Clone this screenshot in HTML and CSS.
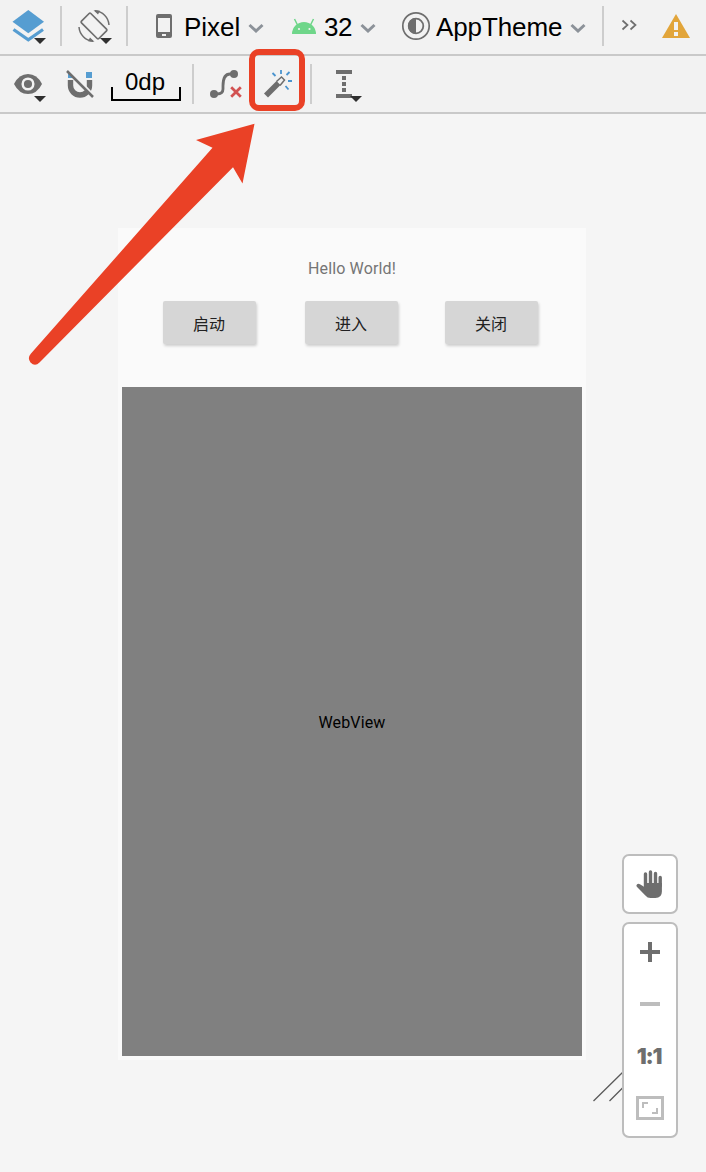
FILE: index.html
```
<!DOCTYPE html>
<html lang="zh">
<head>
<meta charset="utf-8">
<title>Layout Editor</title>
<link rel="stylesheet" href="styles.css">
</head>
<body>
<div class="editor">
  <header class="toolbar toolbar-main">
    <svg class="ic-layers" width="38" height="54" viewBox="10 0 38 54">
      <path d="M28.3 10L44 21.7 28.3 33.3 12.5 21.7z" fill="#569dd1"/>
      <path d="M13.5 29.5L28.3 39.8 43 29.5" fill="none" stroke="#569dd1" stroke-width="3.2"/>
      <path d="M34 38h12l-6 6z" fill="#2f2f2f"/>
    </svg>
    <span class="sep sep-a"></span>
    <svg class="ic-rotate" width="38" height="54" viewBox="76 0 38 54">
      <g fill="none" stroke="#6e6e6e">
        <rect x="-6.6" y="-12.3" width="13.2" height="24.6" rx="1.2" transform="translate(94 26) rotate(-45)" stroke-width="1.7"/>
        <path d="M95 10.800A15.300 15.300 0 0 1 109 25M93 41.200A15.300 15.300 0 0 1 79 27" stroke-width="1.500"/>
      </g>
      <path d="M93.500 10.200l6.500.6-2 3.700zM94.500 41.800l-6.500-.6 2-3.700z" fill="#6e6e6e"/>
      <path d="M100 38h12l-6 6z" fill="#2f2f2f"/>
    </svg>
    <span class="sep sep-b"></span>
    <svg class="ic-phone" width="18" height="54" viewBox="155 0 18 54">
      <path fill-rule="evenodd" d="M158 14h12q2 0 2 2v20q0 2-2 2h-12q-2 0-2-2V16q0-2 2-2zM158 18v14h12V18zM162 34v2h4v-2z" fill="#6e6e6e"/>
    </svg>
    <span class="label label-device">Pixel</span>
    <svg class="chev chev-a" width="16" height="54" viewBox="0 0 16 54"><path d="M1.500 25L8 31l6.500-6" /></svg>
    <svg class="ic-android" width="26" height="54" viewBox="291 0 26 54">
      <path d="M292 34a12 12 0 0 1 24 0z" fill="#6fd68a"/>
      <path d="M297.500 25l-3-6M310.500 25l3-6" stroke="#6fd68a" stroke-width="1.500"/>
      <circle cx="299" cy="29" r="1.100" fill="#f2f2f2"/><circle cx="309.500" cy="29" r="1.100" fill="#f2f2f2"/>
    </svg>
    <span class="label label-api">32</span>
    <svg class="chev chev-b" width="16" height="54" viewBox="0 0 16 54"><path d="M1.500 25L8 31l6.500-6" /></svg>
    <svg class="ic-theme" width="30" height="54" viewBox="401 0 30 54">
      <circle cx="416" cy="26" r="13.200" fill="none" stroke="#6e6e6e" stroke-width="1.700"/>
      <circle cx="416" cy="26" r="7.300" fill="none" stroke="#6e6e6e" stroke-width="1.800"/>
      <path d="M416 18a8 8 0 0 0 0 16z" fill="#6e6e6e"/>
    </svg>
    <span class="label label-theme">AppTheme</span>
    <svg class="chev chev-c" width="16" height="54" viewBox="0 0 16 54"><path d="M1.500 25L8 31l6.500-6" /></svg>
    <span class="sep sep-c"></span>
    <svg class="ic-more" width="16" height="54" viewBox="621 0 16 54">
      <path d="M622.500 20.500l5 4.500-5 4.500M630.500 20.500l5 4.500-5 4.500" fill="none" stroke="#6e6e6e" stroke-width="1.700"/>
    </svg>
    <svg class="ic-warn" width="28" height="54" viewBox="662 0 28 54">
      <path d="M676 14l14 24h-28z" fill="#e2a53a"/>
      <path d="M674 22h4v8h-4zM674 32h4v4h-4z" fill="#f2f2f2"/>
    </svg>
  </header>

  <div class="toolbar toolbar-sub">
    <svg class="ic-eye" width="34" height="56" viewBox="13 56 34 56">
      <path d="M14 84Q19 74 28 74T42 84Q37 94 28 94T14 84z" fill="#6e6e6e"/>
      <circle cx="28" cy="84" r="5.300" fill="none" stroke="#f2f2f2" stroke-width="2.500"/>
      <path d="M34 96h12l-6 6z" fill="#2f2f2f"/>
    </svg>
    <svg class="ic-magnet" width="30" height="56" viewBox="65 56 30 56">
      <path d="M70.500 80v5.500a9.500 9.500 0 0 0 19 0V80" fill="none" stroke="#6e6e6e" stroke-width="5.400"/>
      <path d="M68 73h5v5h-5zM86 72h6v6h-6z" fill="#569dd1"/>
      <path d="M69 70l25 26" stroke="#f2f2f2" stroke-width="3"/>
      <path d="M67 71l26 26" stroke="#6e6e6e" stroke-width="2.500"/>
    </svg>
    <div class="margin-box"><span>0dp</span></div>
    <span class="sep sep-d"></span>
    <svg class="ic-path" width="34" height="56" viewBox="209 56 34 56">
      <path d="M214 94h3q6 0 6-5v-3q0-12 7-12h4" fill="none" stroke="#6e6e6e" stroke-width="2.800"/>
      <circle cx="214" cy="94" r="4" fill="#6e6e6e"/><circle cx="234" cy="74" r="4" fill="#6e6e6e"/>
      <path d="M231.200 87.200l9.600 9.600M240.800 87.200l-9.600 9.600" stroke="#d25252" stroke-width="2.700"/>
    </svg>
    <div class="wand">
      <svg width="30" height="56" viewBox="263 56 30 56">
        <path d="M264 93.500L276.500 81l4 4L268 97.500z" fill="#6e6e6e"/>
        <path d="M276.500 81.500l5-4.500 3 3L280 85.500" fill="none" stroke="#6e6e6e" stroke-width="1.500"/>
        <path d="M281 70v4M272.500 73l3 3M286.500 75l3-3M288 81h4M285.500 86l3 3.500" stroke="#4a94cf" stroke-width="1.800"/>
      </svg>
      <span class="wand-highlight"></span>
    </div>
    <span class="sep sep-e"></span>
    <svg class="ic-guide" width="28" height="56" viewBox="335 56 28 56">
      <path d="M336 70h16v4h-16zM336 94h16v4h-16zM342 76h4v4h-4zM342 82h4v4h-4zM342 88h4v4h-4z" fill="#6e6e6e"/>
      <path d="M350 96h12l-6 6z" fill="#2f2f2f"/>
    </svg>
  </div>

  <main class="surface">
    <section class="device">
      <p class="hello">Hello World!</p>
      <div class="buttons">
        <button class="btn btn-start">启动</button>
        <button class="btn btn-enter">进入</button>
        <button class="btn btn-close">关闭</button>
      </div>
      <div class="webview">WebView</div>
    </section>
    <svg class="resize" width="32" height="32" viewBox="592 1071 32 32">
      <path d="M593.500 1101l30-29.500M609.500 1101l14-14" stroke="#5a5a5a" stroke-width="1.300"/>
    </svg>
    <aside class="controls">
      <div class="panel panel-pan">
        <svg width="28" height="30" viewBox="635 868 28 30">
          <path d="M645.500 886V874M650.500 885v-13M655.500 885v-11.500M660.200 886v-8.500" stroke="#6e6e6e" stroke-width="3.400" stroke-linecap="round"/>
          <path d="M644 883h17.900v8.500q0 6.500-6.500 6.500h-5q-3 0-5-2.500l-8.600-8.700q-1-1.500.3-2.500 1.200-.9 2.800 0l4.200 2.500z" fill="#6e6e6e"/>
        </svg>
      </div>
      <div class="panel panel-zoom">
        <svg width="20" height="20" viewBox="0 0 20 20"><path d="M0 8h8V0h4v8h8v4h-8v8H8v-8H0z" fill="#6e6e6e"/></svg>
        <svg width="20" height="4" viewBox="0 0 20 4"><path d="M0 0h20v4H0z" fill="#bdbdbd"/></svg>
        <span class="ratio">1:1</span>
        <svg width="28" height="24" viewBox="0 0 28 24">
          <path d="M1.500 1.500h25v21h-25z" fill="none" stroke="#bdbdbd" stroke-width="3"/>
          <path d="M7 12V7h5M16 17h5v-5" fill="none" stroke="#bdbdbd" stroke-width="2"/>
        </svg>
      </div>
    </aside>
  </main>

  <svg class="pointer" width="240" height="250" viewBox="20 120 240 250">
    <path d="M254.500 123.700L242.500 183.500 233 167.200 39.500 362.500Q35 367 30.500 362.500 27 358 31 353.500L212.500 147.800 196 140z" fill="#ea4126"/>
  </svg>
</div>
</body>
</html>
```
FILE: styles.css
```
* { box-sizing: border-box; }
body {
  margin: 0;
  background: #f5f5f5;
  font-family: "Liberation Sans", Arial, sans-serif;
}
svg { display: block; flex: none; }
.editor {
  position: relative;
  display: flex;
  flex-direction: column;
  width: 706px;
  height: 1172px;
  overflow: hidden;
}

.toolbar {
  display: flex;
  align-items: flex-start;
  flex: none;
  background: #f2f2f2;
  border-bottom: 2px solid #c9c9c9;
}
.toolbar-main { height: 56px; }
.toolbar-sub { height: 58px; }
.sep {
  flex: none;
  width: 2px;
  height: 40px;
  background: #cdcdcd;
}
.toolbar-main .sep { margin-top: 6px; }
.toolbar-sub .sep { margin-top: 8px; }
.label {
  flex: none;
  font-size: 26px;
  line-height: 54px;
  color: #000;
  white-space: nowrap;
}
.chev path { fill: none; stroke: #8c9299; stroke-width: 3; }

.ic-layers { margin-left: 10px; }
.sep-a { margin-left: 12px; }
.ic-rotate { margin-left: 14px; }
.sep-b { margin-left: 12px; }
.ic-phone { margin-left: 27px; }
.label-device { width: 64px; margin-left: 11px; }
.ic-android { margin-left: 27px; }
.label-api { width: 36px; margin-left: 7px; letter-spacing: -0.5px; }
.ic-theme { margin-left: 25px; }
.label-theme { width: 134px; margin-left: 5px; letter-spacing: -0.1px; }
.sep-c { margin-left: 16px; }
.ic-more { margin-left: 17px; }
.ic-warn { margin-left: 25px; }

.ic-eye { margin-left: 13px; }
.ic-magnet { margin-left: 18px; }
.margin-box {
  width: 70px;
  height: 32px;
  margin: 13px 0 0 16px;
  padding-right: 2px;
  text-align: center;
  font-size: 24px;
  line-height: 25px;
  background:
    linear-gradient(#000, #000) left bottom / 2px 14px no-repeat,
    linear-gradient(#000, #000) right bottom / 2px 14px no-repeat,
    linear-gradient(#000, #000) left bottom / 100% 2px no-repeat;
}
.sep-d { margin-left: 11px; }
.ic-path { margin-left: 15px; }
.wand { position: relative; margin-left: 20px; }
.wand-highlight {
  position: absolute;
  left: -14px;
  top: -7px;
  width: 56px;
  height: 62px;
  border: 6px solid #ea4126;
  border-radius: 10px;
}
.sep-e { margin-left: 17px; }
.ic-guide { margin-left: 23px; }

.surface {
  position: relative;
  flex: 1;
  padding: 114px 0 0 118px;
}
.device {
  display: flex;
  flex-direction: column;
  width: 468px;
  height: 832px;
  padding: 0 4px 4px;
  background: #fafafa;
}
.hello {
  margin: 31px 0 0;
  text-align: center;
  font: 16px/20px Roboto, sans-serif;
  letter-spacing: 0.15px;
  color: #757575;
}
.buttons {
  display: flex;
  padding-left: 41px;
  margin-top: 22px;
}
.btn {
  width: 93px;
  height: 43px;
  padding: 0 1px 0 0;
  border: 0;
  border-radius: 2px;
  background: #d6d6d6;
  box-shadow: 1px 2px 3px rgba(0, 0, 0, 0.18);
  color: #212121;
  font: 16px/42px "Noto Sans CJK SC", sans-serif;
}
.btn-enter { margin-left: 49px; }
.btn-close { margin-left: 47px; }
.webview {
  flex: 1;
  display: flex;
  align-items: center;
  justify-content: center;
  margin-top: 43px;
  padding-top: 3px;
  background: #808080;
  color: #000;
  font: 16px/20px Roboto, sans-serif;
  letter-spacing: 0.15px;
}

.controls {
  position: absolute;
  left: 622px;
  top: 740px;
  display: flex;
  flex-direction: column;
  gap: 8px;
}
.panel {
  display: flex;
  flex-direction: column;
  align-items: center;
  width: 56px;
  border: 2px solid #bdbdbd;
  border-radius: 7px;
  background: #fff;
}
.panel-pan { height: 60px; padding: 12px 2px 0 0; }
.panel-zoom { height: 216px; padding-top: 18px; }
.panel-zoom svg:nth-child(2) { margin-top: 40px; }
.ratio {
  margin-top: 38px;
  padding-right: 2px;
  font: 900 22px/24px Inter, sans-serif;
  letter-spacing: -1.2px;
  color: #6e6e6e;
}
.panel-zoom svg:last-child { margin-top: 28px; }
.resize { position: absolute; left: 592px; top: 957px; }
.pointer { position: absolute; left: 20px; top: 120px; pointer-events: none; }
```
